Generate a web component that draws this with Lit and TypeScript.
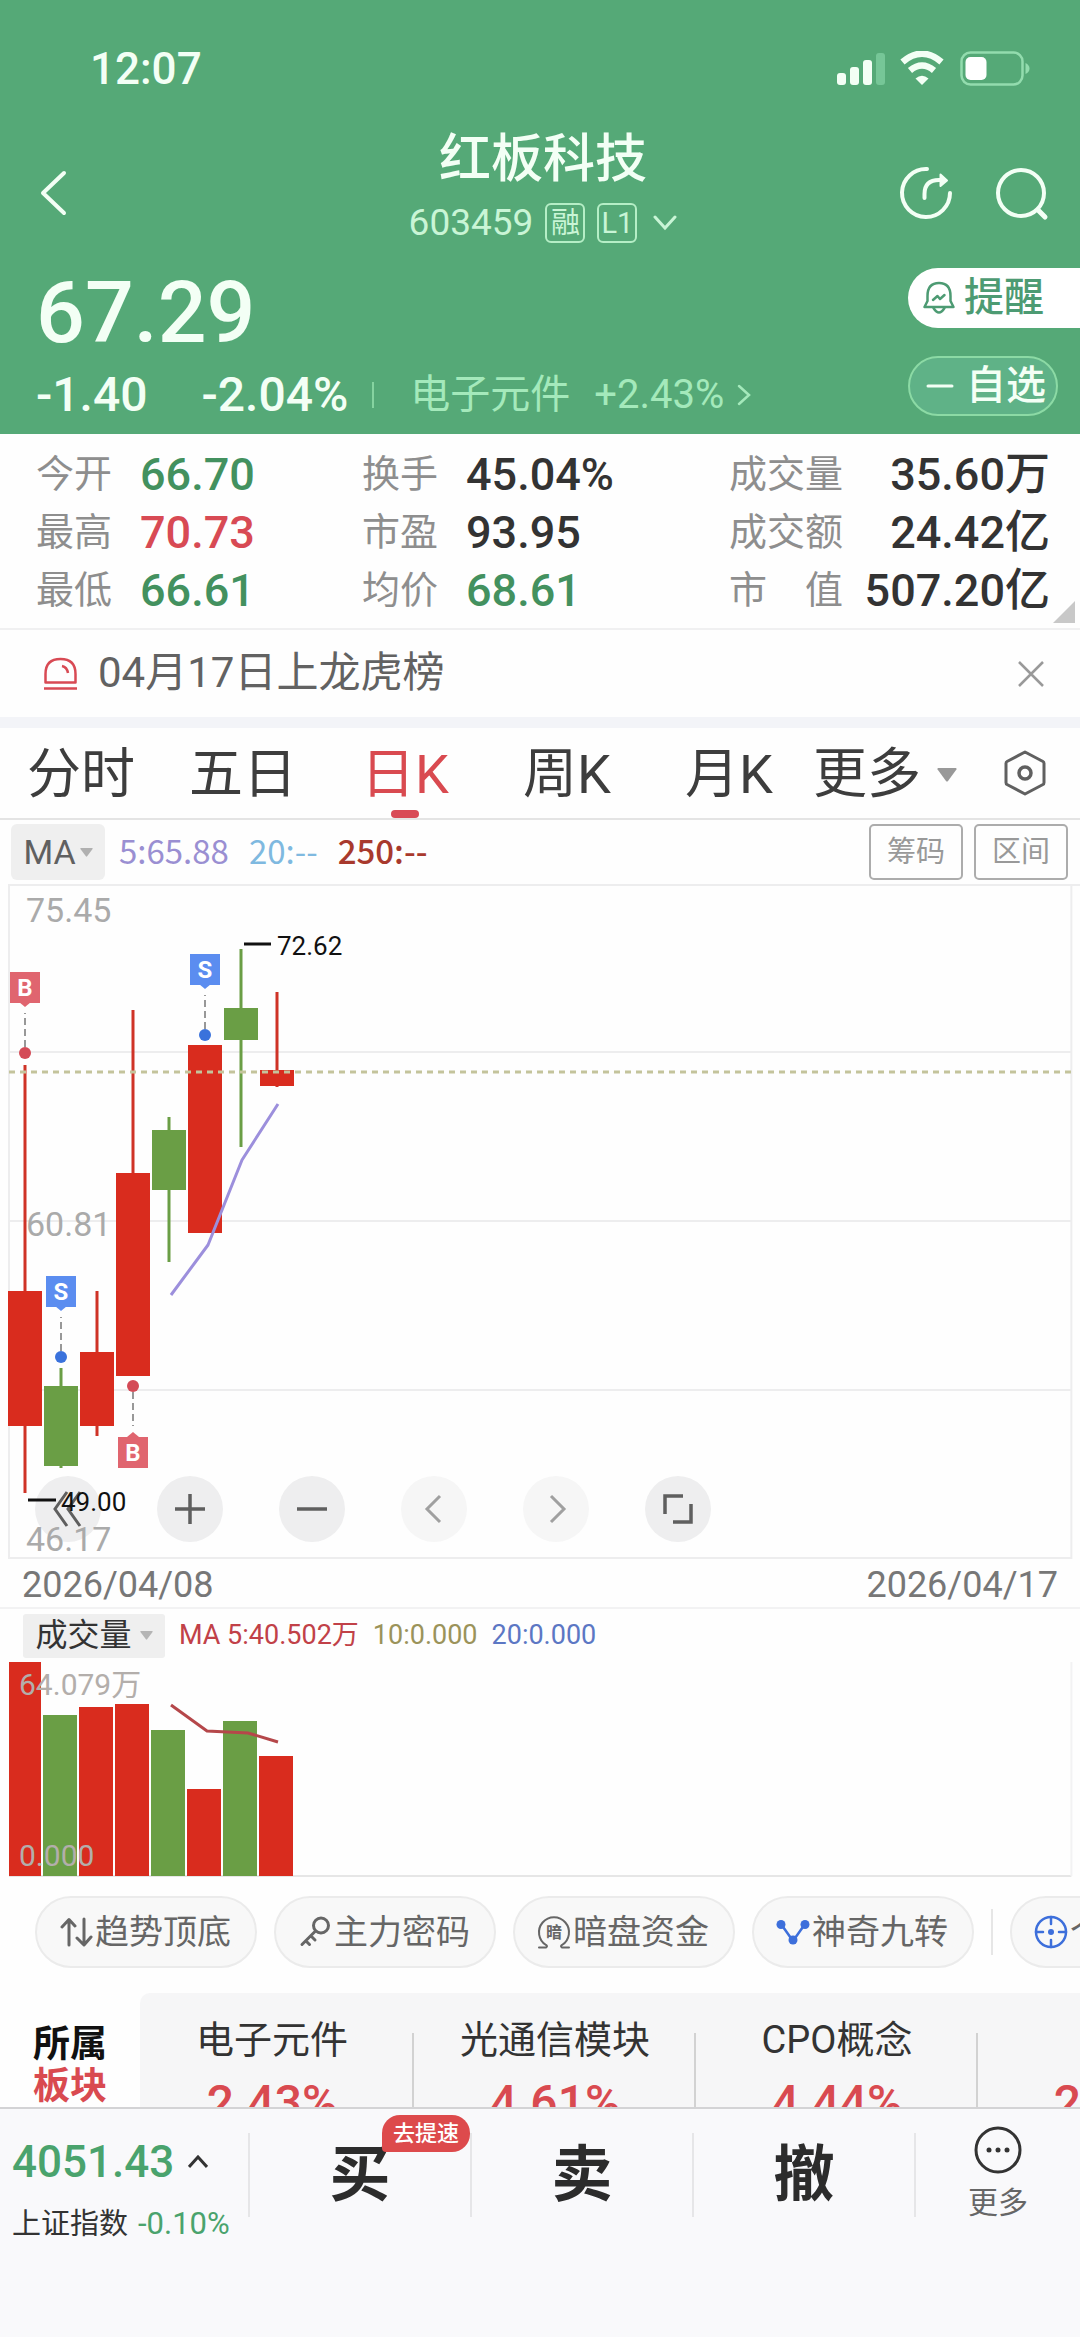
import { LitElement, html, svg, css } from "lit";
import { customElement, state } from "lit/decorators.js";
import { classMap } from "lit/directives/class-map.js";

type Tone = "up" | "down" | "plain";
interface Stat { label: string; value: string; tone: Tone; }
interface Candle { x: number; up: boolean; high: number; top: number; bottom: number; low: number; }
interface Marker { x: number; y: number; kind: "B" | "S"; below?: boolean; }

const STATS: Stat[] = [
  { label: "今开", value: "66.70", tone: "down" },
  { label: "换手", value: "45.04%", tone: "plain" },
  { label: "成交量", value: "35.60万", tone: "plain" },
  { label: "最高", value: "70.73", tone: "up" },
  { label: "市盈", value: "93.95", tone: "plain" },
  { label: "成交额", value: "24.42亿", tone: "plain" },
  { label: "最低", value: "66.61", tone: "down" },
  { label: "均价", value: "68.61", tone: "down" },
  { label: "市\u3000值", value: "507.20亿", tone: "plain" },
];

// Vertical values are pixels below the top edge of the price chart.
const CANDLES: Candle[] = [
  { x: 25, up: true, high: 181, top: 407, bottom: 542, low: 609 },
  { x: 61, up: false, high: 484, top: 502, bottom: 582, low: 584 },
  { x: 97, up: true, high: 407, top: 468, bottom: 542, low: 552 },
  { x: 133, up: true, high: 126, top: 289, bottom: 492, low: 492 },
  { x: 169, up: false, high: 233, top: 246, bottom: 306, low: 378 },
  { x: 205, up: true, high: 161, top: 161, bottom: 349, low: 349 },
  { x: 241, up: false, high: 65, top: 124, bottom: 156, low: 263 },
  { x: 277, up: true, high: 108, top: 186, bottom: 202, low: 203 },
];

const MARKERS: Marker[] = [
  { x: 25, y: 169, kind: "B" },
  { x: 205, y: 151, kind: "S" },
  { x: 61, y: 473, kind: "S" },
  { x: 133, y: 502, kind: "B", below: true },
];

const VOLUMES = [214, 161, 169, 172, 146, 87, 155, 120];
const TABS = ["分时", "五日", "日K", "周K", "月K"];
const SECTORS = [
  { name: "电子元件", change: "2.43%" },
  { name: "光通信模块", change: "4.61%" },
  { name: "CPO概念", change: "4.44%" },
  { name: "PCB", change: "2.15%" },
];

@customElement("app-root")
export class AppRoot extends LitElement {
  @state() private tab = "日K";
  @state() private noticeOpen = true;

  static styles = css`
    :host {
      display: flex;
      flex-direction: column;
      height: 100vh;
      background: #fefefe;
      color: #333;
      font-family: Roboto, "Noto Sans CJK SC", sans-serif;
      line-height: 1.2;
      --green: #55a977;
      --down: #43915f;
      --up: #d84a54;
    }
    *, *::before, *::after { box-sizing: border-box; }
    button {
      font: inherit;
      color: inherit;
      background: none;
      border: 0;
      margin: 0;
      padding: 0;
      cursor: pointer;
    }
    a { color: inherit; text-decoration: none; }
    svg { display: block; }
    h1, dl, dt, dd, p { margin: 0; font-weight: 400; }

    .page {
      flex: 1;
      min-height: 0;
      overflow-y: auto;
      scrollbar-width: none;
    }
    .header { background: var(--green); color: #f3fff5; padding-bottom: 2px; }
    .status {
      display: flex;
      align-items: center;
      justify-content: space-between;
      height: 130px;
      padding: 8px 50px 0 90px;
    }
    .clock { font-size: 44px; line-height: 48px; font-weight: 500; }
    .signals { display: flex; align-items: center; }

    .nav {
      display: grid;
      grid-template-columns: 1fr auto 1fr;
      align-items: center;
      padding: 0 30px 0 36px;
    }
    .back { justify-self: start; }
    .title { text-align: center; }
    .title h1 { font-size: 52px; line-height: 60px; font-weight: 500; }
    .code {
      display: flex;
      align-items: center;
      justify-content: center;
      gap: 12px;
      height: 66px;
      font-size: 37px;
      color: #c9f5d6;
    }
    .code svg { margin-left: 4px; }
    .tag {
      display: grid;
      place-items: center;
      width: 40px;
      height: 40px;
      border: 2px solid #b5eec6;
      border-radius: 6px;
      font-size: 29px;
      line-height: 36px;
    }
    .tools { display: flex; gap: 40px; justify-self: end; }

    .quote { display: flex; justify-content: space-between; padding: 12px 0 0 36px; }
    .price { font-size: 86px; line-height: 90px; font-weight: 500; }
    .change {
      display: flex;
      align-items: center;
      height: 74px;
      font-size: 48px;
      font-weight: 500;
    }
    .percent { padding-left: 54px; }
    .industry {
      display: flex;
      align-items: center;
      gap: 24px;
      margin-left: 24px;
      padding-left: 38px;
      font-size: 40px;
      font-weight: 400;
      color: #a4e9bb;
      background: linear-gradient(#86d3a0, #86d3a0) left center / 2px 26px no-repeat;
    }
    .industry svg { margin-left: -12px; }
    .actions { display: flex; flex-direction: column; gap: 28px; }
    .remind, .watch {
      display: flex;
      align-items: center;
      height: 60px;
      font-size: 40px;
      font-weight: 500;
    }
    .remind {
      width: 172px;
      padding-left: 14px;
      gap: 8px;
      border-radius: 30px 0 0 30px;
      background: #fff;
      color: #4d9b73;
    }
    .watch {
      width: 150px;
      padding-left: 16px;
      gap: 12px;
      border: 2px solid #8cdaa5;
      border-radius: 30px;
      background: #5fb287;
    }

    .stats {
      position: relative;
      display: grid;
      grid-template-columns: 326fr 367fr 321fr;
      padding: 12px 30px 8px 36px;
      border-bottom: 2px solid #f0f0f1;
    }
    .stat {
      display: flex;
      align-items: center;
      height: 58px;
      gap: 28px;
    }
    .stat:nth-child(3n) { justify-content: space-between; gap: 0; }
    .stat dt { font-size: 38px; color: #8e8e8e; white-space: nowrap; }
    .stat dd { font-size: 45px; font-weight: 500; white-space: nowrap; }
    .stat dd.up { color: var(--up); }
    .stat dd.down { color: var(--down); }
    .corner { position: absolute; right: 5px; bottom: 5px; }

    .notice {
      display: flex;
      align-items: center;
      gap: 20px;
      height: 87px;
      padding: 0 34px 0 43px;
      color: #626262;
      font-size: 42px;
    }
    .notice p { flex: 1; }
    .band { height: 11px; background: #f3f4f8; }

    .tabs {
      display: grid;
      grid-template-columns: repeat(5, 162fr) 171fr 99fr;
      height: 92px;
      border-bottom: 2px solid #e4e4e4;
      font-size: 54px;
    }
    .tab { position: relative; color: #3d3d3d; padding-top: 4px; }
    .tab.active { color: #d94a50; }
    .tab.active::after {
      content: "";
      position: absolute;
      left: 50%;
      bottom: 0;
      width: 28px;
      height: 8px;
      margin-left: -14px;
      border-radius: 4px;
      background: #d94a56;
    }
    .more-tab { display: flex; align-items: center; gap: 16px; padding: 4px 0 0 3px; color: #3d3d3d; }
    .settings { display: grid; align-items: center; justify-content: end; padding: 0 34px 0 0; }

    .indicator {
      display: flex;
      align-items: center;
      gap: 20px;
      height: 64px;
      padding: 0 12px 0 11px;
      font-size: 32px;
    }
    .indicator span { font-family: "Noto Sans CJK SC", sans-serif; font-size: 33px; line-height: 56px; padding-bottom: 4px; }
    .picker {
      display: flex;
      align-items: center;
      justify-content: center;
      gap: 4px;
      background: #efefef;
      color: #606060;
    }
    .ma-picker { width: 94px; height: 56px; border-radius: 6px; margin-right: -6px; font-size: 34px; }
    .ma5 { color: #9a8fd2; }
    .ma20 { color: #7fb9e0; }
    .ma250 { color: #a8392d; font-weight: 500; }
    .box {
      width: 94px;
      height: 56px;
      border: 2px solid #acacac;
      border-radius: 5px;
      font-size: 29px;
      color: #999;
    }
    .boxes { display: flex; gap: 11px; margin-left: auto; }

    .chart { position: relative; }
    .canvas { width: 100%; }
    .chart .canvas { position: relative; z-index: 1; pointer-events: none; }
    .chart text, .volume text { font-family: Roboto, "Noto Sans CJK SC", sans-serif; }
    .axis { font-size: 34px; fill: #aaa; }
    .callout { font-size: 26px; fill: #111; }
    .marker { font-size: 24px; font-weight: 700; fill: #fff; text-anchor: middle; }
    .zoombar {
      position: absolute;
      left: 35px;
      bottom: 17px;
      display: flex;
      gap: 56px;
    }
    .round {
      display: grid;
      place-items: center;
      width: 66px;
      height: 66px;
      border-radius: 50%;
      background: #eeeeef;
      color: #5f5f5f;
    }
    .round.faint { background: #f6f6f6; color: #a0a0a0; }

    .dates {
      display: flex;
      align-items: center;
      justify-content: space-between;
      height: 50px;
      padding: 6px 22px 0 22px;
      border-bottom: 2px solid #f2f2f3;
      font-size: 36px;
      color: #777;
    }
    .volume-head {
      display: flex;
      align-items: center;
      gap: 14px;
      height: 53px;
      padding: 0 24px 0 23px;
      font-size: 27px;
    }
    .volume-picker { width: 142px; height: 44px; gap: 8px; border-radius: 3px; font-size: 32px; color: #333; }
    .v5 { color: #c14148; }
    .v10 { color: #9b935a; }
    .v20 { color: #5c77c4; }
    .vaxis { font-size: 30px; fill: #b3aeab; }

    .pills {
      display: flex;
      align-items: center;
      gap: 17px;
      padding: 19px 0 25px 35px;
      overflow: hidden;
    }
    .pill {
      flex: none;
      display: flex;
      align-items: center;
      gap: 2px;
      width: 222px;
      height: 72px;
      padding-left: 22px;
      border: 2px solid #ebebeb;
      border-radius: 36px;
      background: #f8f8f8;
      color: #666;
      font-size: 34px;
      white-space: nowrap;
    }
    .split { flex: none; width: 2px; height: 46px; background: #e6e6e6; }
    .badge-text { font-size: 16px; font-weight: 700; text-anchor: middle; fill: #666; }

    .sectors { display: flex; }
    .sector-label {
      flex: none;
      width: 140px;
      padding: 31px 0 0 33px;
      font-size: 37px;
      line-height: 42px;
      font-weight: 700;
      color: #111;
    }
    .sector-label em { display: block; font-style: normal; color: #d94a50; }
    .sector-list {
      flex: 1;
      min-width: 0;
      display: flex;
      overflow: hidden;
      border-radius: 10px 0 0 0;
      background: #f6f6f7;
    }
    .sector {
      flex: none;
      display: flex;
      flex-direction: column;
      align-items: center;
      width: 282px;
      height: 160px;
      padding-top: 22px;
      background: linear-gradient(#d2d2d2, #d2d2d2) right 40px / 2px 90px no-repeat;
      font-size: 38px;
      line-height: 50px;
    }
    .sector:first-child { width: 274px; padding-right: 10px; }
    .sector strong { font-size: 48px; line-height: 76px; font-weight: 500; color: #d94a50; }

    .bar {
      flex: none;
      display: grid;
      grid-template-columns: 248fr 222fr 222fr 222fr 166fr;
      padding: 24px 0 90px;
      border-top: 2px solid #d3d3d5;
      background: #f9f9fb;
    }
    .index { display: flex; flex-direction: column; align-items: flex-start; padding: 4px 0 0 12px; text-align: left; }
    .level { display: flex; align-items: center; gap: 14px; height: 50px; font-size: 44px; font-weight: 500; color: #4aa36d; }
    .level svg { color: #333; }
    .market { display: flex; gap: 10px; align-items: center; height: 46px; margin-top: 14px; font-size: 29px; color: #333; white-space: nowrap; }
    .market span { color: #4aa36d; font-size: 31px; }
    .trade {
      position: relative;
      height: 84px;
      border-left: 2px solid #e6e6e8;
      font-size: 61px;
      line-height: 84px;
      font-weight: 700;
      color: #2c2c2c;
    }
    .flag {
      position: absolute;
      left: 132px;
      top: -18px;
      height: 37px;
      padding: 0 11px;
      border-radius: 18px 18px 18px 4px;
      background: #dd4a4c;
      color: #fff;
      font-size: 22px;
      line-height: 37px;
      font-weight: 500;
      white-space: nowrap;
    }
    .more {
      display: flex;
      flex-direction: column;
      align-items: center;
      gap: 9px;
      height: 84px;
      border-left: 2px solid #e6e6e8;
      font-size: 30px;
      line-height: 40px;
      color: #666;
    }
    .more svg { flex: none; margin-top: -7px; color: #333; }
  `;

  private caret(w: number, h: number, fill: string) {
    return html`<svg width=${w} height=${h} viewBox="0 0 20 14" aria-hidden="true"><path d="M1 0h18q1 .6.4 1.600L11 13q-1 1-2 0L.6 1.600Q0 .6 1 0z" fill=${fill}/></svg>`;
  }

  private candle(c: Candle) {
    const color = c.up ? "#d92c1e" : "#6a9e45";
    return svg`<g>
      <line x1=${c.x} x2=${c.x} y1=${c.high} y2=${c.low} stroke=${c.up ? "#cf3327" : "#6a9e45"} stroke-width="3"/>
      <rect x=${c.x - 17} y=${c.top} width="34" height=${c.bottom - c.top} fill=${color}/>
    </g>`;
  }

  private marker(m: Marker) {
    const dir = m.below ? 1 : -1;
    const fill = m.kind === "B" ? "#e0656f" : "#5b8df0";
    const dot = m.kind === "B" ? "#d44a56" : "#3a72dc";
    const near = m.y + dir * 51;
    const tip = m.y + dir * 46;
    const top = m.below ? near : near - 30;
    return svg`<g>
      <circle cx=${m.x} cy=${m.y} r="6" fill=${dot}/>
      <line x1=${m.x} x2=${m.x} y1=${m.y + dir * 6} y2=${m.y + dir * 40} stroke="#777" stroke-width="1.500" stroke-dasharray="7 4"/>
      <path d=${`M${m.x - 6} ${near}L${m.x} ${tip}L${m.x + 6} ${near}z`} fill=${fill}/>
      <rect x=${m.x - 15} y=${top} width="30" height="31" fill=${fill}/>
      <text class="marker" x=${m.x} y=${top + 24}>${m.kind}</text>
    </g>`;
  }

  private renderHeader() {
    return html`
      <header class="header">
        <div class="status">
          <span class="clock">12:07</span>
          <div class="signals" aria-hidden="true">
            <svg width="193" height="36" viewBox="0 0 193 36" fill="none">
              <g fill="#f3fff5">
                <rect x="0" y="22" width="9" height="12" rx="3"/>
                <rect x="13" y="16" width="9" height="18" rx="3"/>
                <rect x="26" y="9" width="9" height="25" rx="3"/>
              </g>
              <rect x="39" y="2" width="9" height="32" rx="3" fill="#76c697"/>
              <path d="M65.500 11Q85 -5.500 104.500 11" stroke="#f3fff5" stroke-width="6.500"/>
              <path d="M73 19.500Q85 9.500 97 19.500" stroke="#f3fff5" stroke-width="6.500"/>
              <path d="M85 34L78.500 27.500Q85 22 91.500 27.500z" fill="#f3fff5"/>
              <rect x="124.500" y="1.500" width="61" height="32" rx="9" stroke="#93dcae" stroke-width="2.500"/>
              <rect x="128.500" y="6" width="21" height="23" rx="5" fill="#fff"/>
              <path d="M188.500 12q4 2 4 5.500t-4 5.500z" fill="#93dcae"/>
            </svg>
          </div>
        </div>
        <div class="nav">
          <button class="back" aria-label="返回">
            <svg width="36" height="48" viewBox="0 0 36 48" fill="none" stroke="currentColor" stroke-width="4" stroke-linecap="round" stroke-linejoin="round"><path d="M28 4L7 24L28 44"/></svg>
          </button>
          <div class="title">
            <h1>红板科技</h1>
            <div class="code">
              <span>603459</span><span class="tag">融</span><span class="tag">L1</span>
              <svg width="24" height="16" viewBox="0 0 24 16" fill="none" stroke="currentColor" stroke-width="3" stroke-linecap="round"><path d="M2 2L12 13L22 2"/></svg>
            </div>
          </div>
          <div class="tools">
            <button aria-label="分享">
              <svg width="56" height="56" viewBox="0 0 56 56" fill="none" stroke="currentColor" stroke-width="4" stroke-linecap="round" stroke-linejoin="round">
                <path d="M29 4A24 24 0 1 0 52 28"/>
                <path d="M26.500 33V29Q26.500 15 41 15H45"/>
                <path d="M42.500 9.500L49 15.500L42.500 21z" fill="currentColor" stroke-width="2"/>
              </svg>
            </button>
            <button aria-label="搜索">
              <svg width="56" height="56" viewBox="0 0 56 56" fill="none" stroke="currentColor" stroke-width="4" stroke-linecap="round"><circle cx="27" cy="28" r="23"/><path d="M44 45L51 52" stroke-width="5"/></svg>
            </button>
          </div>
        </div>
        <div class="quote">
          <div>
            <div class="price">67.29</div>
            <div class="change">
              <span>-1.40</span><span class="percent">-2.04%</span>
              <a class="industry" href="#industry"><span>电子元件</span><span>+2.43%</span>
                <svg width="16" height="24" viewBox="0 0 16 24" fill="none" stroke="currentColor" stroke-width="2.500" stroke-linecap="round"><path d="M3 3L13 12L3 21"/></svg>
              </a>
            </div>
          </div>
          <div class="actions">
            <button class="remind">
              <svg width="34" height="34" viewBox="0 0 34 34" fill="none" stroke="currentColor" stroke-width="2.500" stroke-linejoin="round" stroke-linecap="round">
                <path d="M5.500 20V15Q5.500 2 17 2T28.500 15V20L31.500 26H2.500z"/>
                <path d="M11.500 27Q17 36 22.500 27"/><path d="M11 19L15.500 15L18 18L22.500 14"/>
              </svg>提醒
            </button>
            <button class="watch">
              <svg width="28" height="28" viewBox="0 0 28 28" stroke="currentColor" stroke-width="3" stroke-linecap="round"><path d="M2 14H26"/></svg>自选
            </button>
          </div>
        </div>
      </header>`;
  }

  private renderChart() {
    return html`
      <div class="indicator">
        <button class="picker ma-picker">MA${this.caret(13, 9, "#b0b0b0")}</button>
        <span class="ma5">5:65.88</span><span class="ma20">20:--</span><span class="ma250">250:--</span>
        <div class="boxes"><button class="box">筹码</button><button class="box">区间</button></div>
      </div>
      <div class="chart">
        <svg class="canvas" height="675" role="img" aria-label="日K线图">
          <g stroke="#ededee" stroke-width="2">
            <line x1="9" x2="100%" y1="1" y2="1"/>
            <line x1="9" x2="9" y1="0" y2="675"/>
            <line x1="9" x2="99.200%" y1="168" y2="168"/>
            <line x1="9" x2="99.200%" y1="337" y2="337"/>
            <line x1="9" x2="99.200%" y1="506" y2="506"/>
            <line x1="99.200%" x2="99.200%" y1="0" y2="675"/>
            <line x1="9" x2="99.200%" y1="674" y2="674"/>
          </g>
          ${CANDLES.map((c) => this.candle(c))}
          <line x1="9" x2="99.200%" y1="188" y2="188" stroke="#c4c49c" stroke-width="3" stroke-dasharray="6 5"/>
          <path d="M171 411L208 361L242 276L278 220" fill="none" stroke="#9c8fdc" stroke-width="3" stroke-linejoin="round"/>
          ${MARKERS.map((m) => this.marker(m))}
          <text class="axis" x="26" y="38">75.45</text>
          <text class="axis" x="26" y="352">60.81</text>
          <text class="axis" x="26" y="667">46.17</text>
          <line x1="244" x2="271" y1="60" y2="60" stroke="#111" stroke-width="3"/>
          <text class="callout" x="277" y="71">72.62</text>
          <line x1="28" x2="56" y1="616" y2="616" stroke="#111" stroke-width="3"/>
          <text class="callout" x="61" y="627">49.00</text>
        </svg>
        <div class="zoombar">
          <button class="round" aria-label="最早"><svg width="32" height="40" viewBox="0 0 32 40" fill="none" stroke="currentColor" stroke-width="3"><path d="M15 3L3 20L15 37M28 3L16 20L28 37"/></svg></button>
          <button class="round" aria-label="放大"><svg width="32" height="32" viewBox="0 0 32 32" stroke="currentColor" stroke-width="3.500"><path d="M1 16H31M16 1V31"/></svg></button>
          <button class="round" aria-label="缩小"><svg width="32" height="32" viewBox="0 0 32 32" stroke="currentColor" stroke-width="3.500"><path d="M1 16H31"/></svg></button>
          <button class="round faint" aria-label="左移"><svg width="32" height="32" viewBox="0 0 32 32" fill="none" stroke="currentColor" stroke-width="3"><path d="M22 3L9 16L22 29"/></svg></button>
          <button class="round faint" aria-label="右移"><svg width="32" height="32" viewBox="0 0 32 32" fill="none" stroke="currentColor" stroke-width="3"><path d="M11 3L24 16L11 29"/></svg></button>
          <button class="round" aria-label="全屏"><svg width="32" height="32" viewBox="0 0 32 32" fill="none" stroke="currentColor" stroke-width="3.500"><path d="M21 3H3V21M11 29H29V11"/></svg></button>
        </div>
      </div>
      <div class="dates"><time>2026/04/08</time><time>2026/04/17</time></div>
      <div class="volume">
        <div class="volume-head">
          <button class="picker volume-picker">成交量${this.caret(13, 9, "#b5b5b5")}</button>
          <span class="v5">MA 5:40.502万</span><span class="v10">10:0.000</span><span class="v20">20:0.000</span>
        </div>
        <svg class="canvas" height="215" role="img" aria-label="成交量图">
          <line x1="9" x2="99.200%" y1="214" y2="214" stroke="#e6e6e6" stroke-width="2"/>
          <line x1="99.200%" x2="99.200%" y1="0" y2="214" stroke="#f2f2f3" stroke-width="2"/>
          ${VOLUMES.map((v, i) => svg`<rect x=${i ? 7 + i * 36 : 9} y=${214 - v} width=${i ? 34 : 32} height=${v} fill=${CANDLES[i].up ? "#d92c1e" : "#6a9e45"}/>`)}
          <path d="M171 43L207 69L248 71L278 80" fill="none" stroke="#b5474a" stroke-width="3"/>
          <text class="vaxis" x="19" y="33">64.079万</text>
          <text class="vaxis" x="19" y="204">0.000</text>
        </svg>
      </div>`;
  }

  private renderPills() {
    const icon = (body: unknown, color = "currentColor") =>
      html`<svg width="34" height="34" viewBox="0 0 34 34" fill="none" stroke=${color} stroke-width="2.500" stroke-linecap="round" stroke-linejoin="round" aria-hidden="true">${body}</svg>`;
    return html`
      <nav class="pills">
        <button class="pill">${icon(svg`<path d="M10 30V5M3 12L10 4.500L16 11M25 4V29M18 23L25 30L32 22" stroke-width="3"/>`)}趋势顶底</button>
        <button class="pill">${icon(svg`<circle cx="23" cy="10.500" r="7.500" stroke-width="3"/><path d="M17.500 16L4 29.500M13 21L17 25M8 26L11.500 29.500" stroke-width="3"/>`)}主力密码</button>
        <button class="pill">${icon(svg`<path d="M9 30A15 15 0 1 1 25 30M2 32.500H9Q11 31 9 30M32 32.500H25Q23 31 25 30" stroke-width="2"/><text class="badge-text" stroke="none" x="17" y="23">暗</text>`)}暗盘资金</button>
        <button class="pill">${icon(svg`<path d="M5 9L17 26L29 9" stroke-width="2.500"/><g fill="#3d6fdb" stroke="none"><circle cx="5" cy="9.500" r="4.500"/><circle cx="17" cy="25" r="4.500"/><circle cx="29" cy="9.500" r="4.500"/></g>`, "#3d6fdb")}神奇九转</button>
        <span class="split"></span>
        <button class="pill">${icon(svg`<circle cx="17" cy="17" r="15"/><path d="M17 2V9M17 25V32M2 17H9M25 17H32"/><circle cx="17" cy="17" r="3" fill="#3d6fdb" stroke="none"/>`, "#3d6fdb")}个股诊断</button>
      </nav>`;
  }

  render() {
    return html`
      <main class="page">
        ${this.renderHeader()}
        <dl class="stats">
          ${STATS.map((s) => html`<div class="stat"><dt>${s.label}</dt><dd class=${s.tone}>${s.value}</dd></div>`)}
          <svg class="corner" width="22" height="22" viewBox="0 0 22 22" aria-hidden="true"><path d="M22 0V22H0z" fill="#c8c8c8"/></svg>
        </dl>
        ${this.noticeOpen ? html`
          <div class="notice">
            <svg width="35" height="34" viewBox="0 0 35 34" fill="none" stroke="#d84a54" stroke-width="2.500" stroke-linejoin="round" aria-hidden="true">
              <path d="M2.500 25.500V17Q2.500 2 17.500 2T32.500 17V25.500z"/><path d="M1 31.500H34M19 9Q24 10 25 16"/>
            </svg>
            <p>04月17日上龙虎榜</p>
            <button aria-label="关闭" @click=${() => (this.noticeOpen = false)}>
              <svg width="30" height="30" viewBox="0 0 30 30" stroke="#999" stroke-width="2.500"><path d="M3 3L27 27M27 3L3 27"/></svg>
            </button>
          </div>` : null}
        <div class="band"></div>
        <div class="tabs">
          ${TABS.map((t) => html`<button class=${classMap({ tab: true, active: t === this.tab })} @click=${() => (this.tab = t)}>${t}</button>`)}
          <button class="more-tab">更多${this.caret(20, 14, "#999")}</button>
          <button class="settings" aria-label="设置">
            <svg width="42" height="46" viewBox="0 0 42 46" fill="none" stroke="#606060" stroke-width="3" stroke-linejoin="round"><path d="M21 2L39 11.500Q40 12 40 13.500V32.500Q40 34 39 34.500L21 44L3 34.500Q2 34 2 32.500V13.500Q2 12 3 11.500z"/><circle cx="21" cy="23" r="6" stroke-width="3.500"/></svg>
          </button>
        </div>
        ${this.renderChart()}
        ${this.renderPills()}
        <section class="sectors">
          <div class="sector-label">所属<em>板块</em></div>
          <div class="sector-list">
            ${SECTORS.map((s) => html`<a class="sector" href="#sector"><span>${s.name}</span><strong>${s.change}</strong></a>`)}
          </div>
        </section>
      </main>
      <footer class="bar">
        <button class="index">
          <span class="level">4051.43<svg width="20" height="14" viewBox="0 0 20 14" fill="none" stroke="currentColor" stroke-width="3"><path d="M1 12L10 2L19 12"/></svg></span>
          <span class="market">上证指数<span>-0.10%</span></span>
        </button>
        <button class="trade">买<span class="flag">去提速</span></button>
        <button class="trade">卖</button>
        <button class="trade">撤</button>
        <button class="more">
          <svg width="48" height="48" viewBox="0 0 48 48" fill="none" stroke="currentColor" stroke-width="3"><circle cx="24" cy="24" r="22"/><g fill="currentColor" stroke="none"><circle cx="15" cy="24" r="2.500"/><circle cx="24" cy="24" r="2.500"/><circle cx="33" cy="24" r="2.500"/></g></svg>
          更多
        </button>
      </footer>`;
  }
}
